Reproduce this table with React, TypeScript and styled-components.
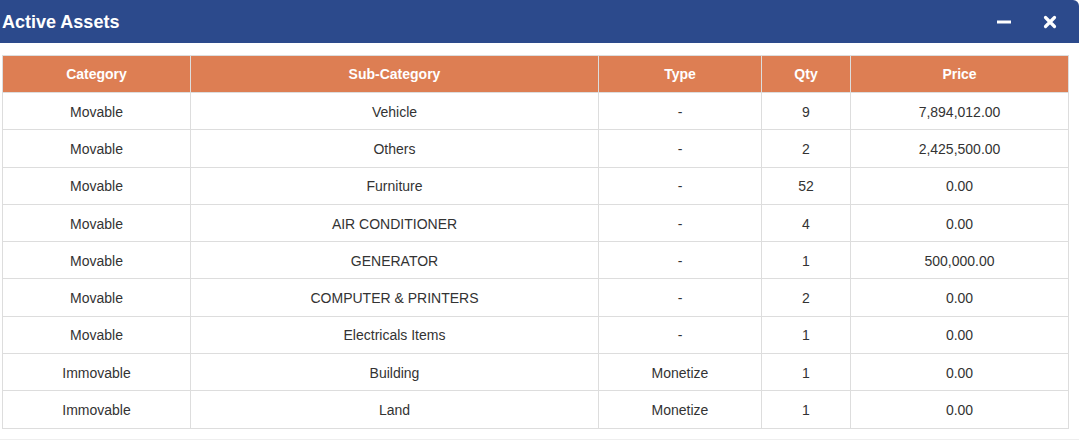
import React from "react";
import styled, { createGlobalStyle } from "styled-components";

const Global = createGlobalStyle`
  html, body { margin: 0; padding: 0; background: #fff; }
  body { font-family: "Liberation Sans", Arial, sans-serif; color: #333; }
`;

const Modal = styled.div`
  width: 1079px;
  height: 442px;
  display: flex;
  flex-direction: column;
  box-sizing: border-box;
  overflow: hidden;
`;

const TitleBar = styled.div`
  height: 43px;
  background: #2c4a8c;
  border-top-right-radius: 6px;
  display: flex;
  align-items: center;
  justify-content: space-between;
  padding: 0 21px 0 2px;
  box-sizing: border-box;
  flex: none;
`;

const Title = styled.h4`
  margin: 0;
  color: #fff;
  font-size: 18px;
  font-weight: bold;
  font-family: "Liberation Sans", Arial, sans-serif;
  position: relative;
  top: 1px;
`;

const Tools = styled.div`
  display: flex;
  align-items: center;
  gap: 30px;
`;

const ToolButton = styled.button`
  border: 0;
  background: transparent;
  padding: 0;
  width: 16px;
  height: 16px;
  display: flex;
  align-items: center;
  justify-content: center;
  cursor: pointer;
`;

const Body = styled.div`
  padding: 12px 11px 10px 2px;
  border-bottom: 1px solid #eeeeee;
  flex: none;
`;

const Table = styled.table`
  width: 1066px;
  border-collapse: collapse;
  table-layout: fixed;
  font-size: 14px;
  font-family: "Liberation Sans", Arial, sans-serif;
`;

const Th = styled.th<{ $w: number }>`
  width: ${(p) => p.$w}px;
  background: #dd7e53;
  color: #fff;
  font-weight: bold;
  font-size: 14px;
  text-align: center;
  border: 1px solid #dddddd;
  height: 37px;
  padding: 0 8px;
  box-sizing: border-box;
`;

const Tr = styled.tr`
  height: 37.3px;
`;

const Td = styled.td`
  border: 1px solid #dddddd;
  text-align: center;
  padding: 1px 8px 0;
  color: #333;
  line-height: 20px;
`;

const cols = [
  { label: "Category", w: 188 },
  { label: "Sub-Category", w: 408 },
  { label: "Type", w: 163 },
  { label: "Qty", w: 89 },
  { label: "Price", w: 218 },
];

const rows = [
  ["Movable", "Vehicle", "-", "9", "7,894,012.00"],
  ["Movable", "Others", "-", "2", "2,425,500.00"],
  ["Movable", "Furniture", "-", "52", "0.00"],
  ["Movable", "AIR CONDITIONER", "-", "4", "0.00"],
  ["Movable", "GENERATOR", "-", "1", "500,000.00"],
  ["Movable", "COMPUTER & PRINTERS", "-", "2", "0.00"],
  ["Movable", "Electricals Items", "-", "1", "0.00"],
  ["Immovable", "Building", "Monetize", "1", "0.00"],
  ["Immovable", "Land", "Monetize", "1", "0.00"],
];

const MinusIcon = () => (
  <svg width="14" height="14" viewBox="0 0 14 14">
    <rect x="0" y="5.5" width="14" height="3" fill="#fff" />
  </svg>
);

const CloseIcon = () => (
  <svg width="14" height="14" viewBox="0 0 14 14">
    <path d="M2.5 2.5 L11.5 11.5 M11.5 2.5 L2.5 11.5" stroke="#fff" strokeWidth="3.2" strokeLinecap="round" />
  </svg>
);

export default function App() {
  return (
    <>
      <Global />
      <Modal>
        <TitleBar>
          <Title>Active Assets</Title>
          <Tools>
            <ToolButton aria-label="minimize"><MinusIcon /></ToolButton>
            <ToolButton aria-label="close"><CloseIcon /></ToolButton>
          </Tools>
        </TitleBar>
        <Body>
          <Table>
            <thead>
              <tr>
                {cols.map((c) => (
                  <Th key={c.label} $w={c.w}>{c.label}</Th>
                ))}
              </tr>
            </thead>
            <tbody>
              {rows.map((r, i) => (
                <Tr key={i}>
                  {r.map((v, j) => (
                    <Td key={j}>{v}</Td>
                  ))}
                </Tr>
              ))}
            </tbody>
          </Table>
        </Body>
      </Modal>
    </>
  );
}
